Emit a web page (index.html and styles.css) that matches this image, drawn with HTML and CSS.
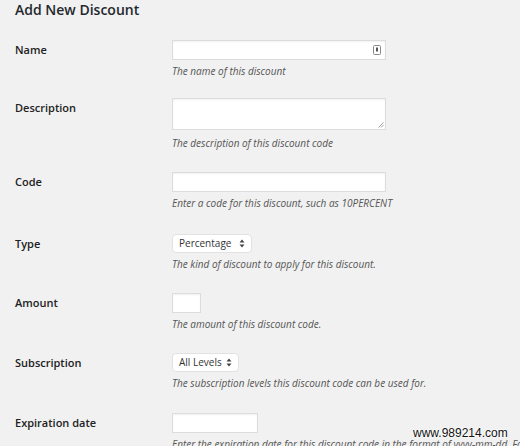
FILE: index.html
```html
<!DOCTYPE html>
<html>
<head>
<meta charset="utf-8">
<link rel="stylesheet" href="styles.css">
</head>
<body>
<div class="page">
  <h2 class="title">Add New Discount</h2>
  <div class="form">
    <div class="row tight">
      <div class="label">Name</div>
      <div class="cell">
        <div class="input w-wide">
          <svg class="keyicon" width="8" height="10" viewBox="0 0 8 10"><rect x="0.5" y="0.5" width="7" height="9" rx="1" fill="#fff" stroke="#888"/><rect x="3" y="2.5" width="2" height="4" fill="#555"/></svg>
        </div>
        <div class="help">The name of this discount</div>
      </div>
    </div>
    <div class="row">
      <div class="label">Description</div>
      <div class="cell">
        <div class="input textarea w-wide">
          <svg class="grip" width="7" height="7" viewBox="0 0 7 7"><path d="M6.5 1.5 L1.5 6.5 M6.5 4 L4 6.5" stroke="#888" stroke-width="0.8"/></svg>
        </div>
        <div class="help help-area">The description of this discount code</div>
      </div>
    </div>
    <div class="row loose">
      <div class="label">Code</div>
      <div class="cell">
        <div class="input w-wide"></div>
        <div class="help">Enter a code for this discount, such as 10PERCENT</div>
      </div>
    </div>
    <div class="row">
      <div class="label">Type</div>
      <div class="cell">
        <div class="select w-type"><span>Percentage</span>
          <svg class="arrows" width="6" height="9" viewBox="0 0 6 9"><path d="M3 0.5 L5.5 3.5 L0.5 3.5 Z M3 8.5 L5.5 5.5 L0.5 5.5 Z" fill="#444"/></svg>
        </div>
        <div class="help">The kind of discount to apply for this discount.</div>
      </div>
    </div>
    <div class="row">
      <div class="label">Amount</div>
      <div class="cell">
        <div class="input w-amount"></div>
        <div class="help">The amount of this discount code.</div>
      </div>
    </div>
    <div class="row extra">
      <div class="label">Subscription</div>
      <div class="cell">
        <div class="select w-levels"><span>All Levels</span>
          <svg class="arrows" width="6" height="9" viewBox="0 0 6 9"><path d="M3 0.5 L5.5 3.5 L0.5 3.5 Z M3 8.5 L5.5 5.5 L0.5 5.5 Z" fill="#444"/></svg>
        </div>
        <div class="help">The subscription levels this discount code can be used for.</div>
      </div>
    </div>
    <div class="row">
      <div class="label">Expiration date</div>
      <div class="cell">
        <div class="input w-date"></div>
        <div class="help">Enter the expiration date for this discount code in the format of yyyy-mm-dd. For example, 2015-12-31.</div>
      </div>
    </div>
  </div>
</div>
<div class="watermark">www.989214.com</div>
</body>
</html>
```
FILE: styles.css
```css
html, body {
  margin: 0;
  padding: 0;
  background: #f1f1f1;
  overflow: hidden;
}
body {
  width: 520px;
  height: 446px;
  position: relative;
  font-family: "Open Sans", "Liberation Sans", sans-serif;
  color: #23282d;
}
.page {
  padding: 0 0 0 15px;
  height: 446px;
  overflow: hidden;
}
.title {
  margin: 0;
  font-size: 14px;
  font-weight: 600;
  line-height: 20px;
  color: #23282d;
}
.form {
  margin-top: 20px;
  display: flex;
  flex-direction: column;
  gap: 22px;
}
.row {
  display: grid;
  grid-template-columns: 157px 1fr;
}
.row.tight { margin-bottom: -2px; }
.row.loose { margin-bottom: 2px; }
.row.extra { margin-bottom: 1px; }
.label {
  font-size: 11px;
  font-weight: 600;
  line-height: 20px;
  color: #222;
}
.cell {
  min-width: 0;
}
.input {
  box-sizing: border-box;
  height: 20px;
  background: #fff;
  border: 1px solid #dcdcdc;
  box-shadow: inset 0 1px 2px rgba(0,0,0,0.06);
  position: relative;
}
.textarea {
  height: 32px;
}
.w-wide { width: 214px; }
.w-amount { width: 29px; }
.w-date { width: 86px; }
.w-type { width: 80px; }
.w-levels { width: 67px; }
.keyicon {
  position: absolute;
  right: 4px;
  top: 4px;
}
.grip {
  position: absolute;
  right: 1px;
  bottom: 1px;
}
.select {
  box-sizing: border-box;
  height: 19px;
  background: #fff;
  border: 1px solid #e2e2e2;
  border-radius: 4px;
  display: flex;
  align-items: center;
  justify-content: space-between;
  padding: 0 6px 0 6px;
  font-size: 10px;
  color: #333;
}
.select span {
  line-height: 17px;
}
.help {
  margin-top: 4px;
  font-size: 10px;
  line-height: 14px;
  font-style: italic;
  color: #555;
  white-space: nowrap;
}
.help.help-area {
  margin-top: 6px;
}
.watermark {
  position: absolute;
  left: 413px;
  top: 426px;
  font-family: "Liberation Sans", Arial, sans-serif;
  font-size: 12px;
  color: #111;
  text-shadow: 0 0 2px #fff, 0 0 2px #fff, 0 0 2px #fff;
}
```
